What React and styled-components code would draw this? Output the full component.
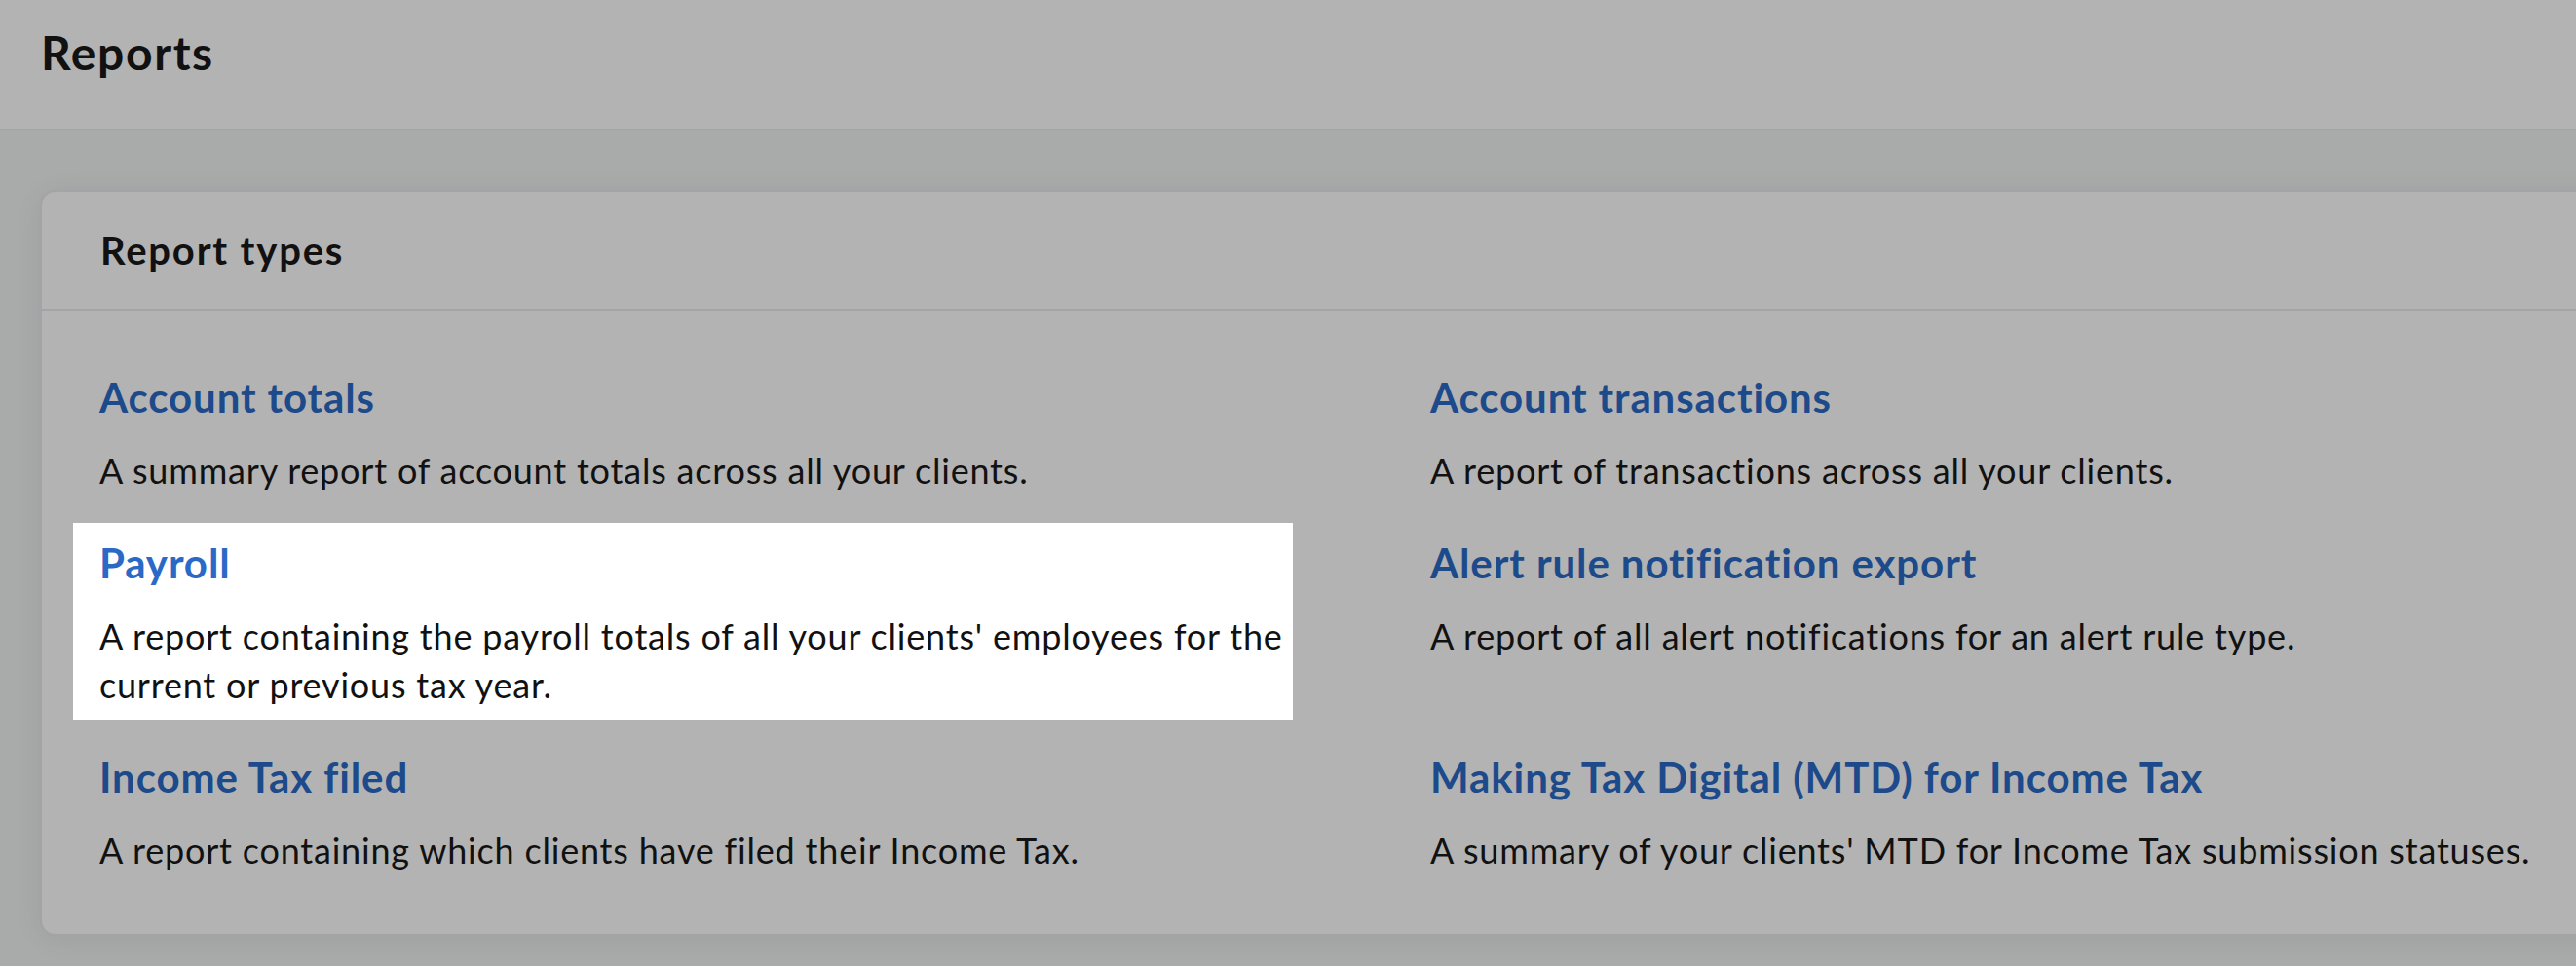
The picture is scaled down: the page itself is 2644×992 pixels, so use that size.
import React from "react";
import styled, { createGlobalStyle } from "styled-components";

const GlobalStyle = createGlobalStyle`
  body {
    margin: 0;
    background: #a9aaaa;
    font-family: Lato, "Liberation Sans", sans-serif;
    color: #111;
    overflow: hidden;
  }
`;

const Page = styled.div`
  width: 2644px;
  height: 992px;
  overflow: hidden;
`;

const Header = styled.header`
  height: 132px;
  background: #b3b3b3;
  border-bottom: 2px solid #a3a3a8;
  padding-left: 42px;
  display: flex;
  align-items: flex-start;
`;

const PageTitle = styled.h1`
  margin: 0;
  padding-top: 24px;
  font-size: 48px;
  line-height: 60px;
  font-weight: 700;
  letter-spacing: 1.6px;
  color: #111;
`;

const Main = styled.main`
  padding: 61px 0 0 41px;
`;

const Card = styled.section`
  width: 2800px;
  background: #b3b3b3;
  border: 2px solid #a3a3a8;
  border-radius: 16px;
  box-shadow: 0 4px 28px rgba(0, 0, 0, 0.07);
`;

const CardHeader = styled.div`
  height: 120px;
  border-bottom: 2px solid #a3a3a8;
  padding-left: 60px;
  display: flex;
  align-items: center;
`;

const CardTitle = styled.h2`
  margin: 0;
  font-size: 40px;
  line-height: 48px;
  font-weight: 700;
  letter-spacing: 1.8px;
  color: #111;
`;

const Grid = styled.div`
  display: grid;
  grid-template-columns: 1252px 1252px;
  column-gap: 114px;
  row-gap: 18px;
  padding: 48px 0 50px 32px;
  align-items: start;
`;

const Item = styled.div`
  padding: 15px 0 11px 27px;
  background: ${(p) => (p.$active ? "#ffffff" : "transparent")};
`;

const ItemLink = styled.a`
  display: block;
  font-size: 42px;
  line-height: 52px;
  font-weight: 700;
  letter-spacing: 0.9px;
  text-decoration: none;
  color: ${(p) => (p.$active ? "#2b69c6" : "#1d4a8a")};
`;

const ItemText = styled.p`
  margin: 24px 0 0;
  font-size: 36px;
  line-height: 50px;
  letter-spacing: 0.8px;
  color: #111;
`;

const reports = [
  {
    title: "Account totals",
    text: "A summary report of account totals across all your clients.",
  },
  {
    title: "Account transactions",
    text: "A report of transactions across all your clients.",
  },
  {
    title: "Payroll",
    text:
      "A report containing the payroll totals of all your clients' employees for the current or previous tax year.",
    active: true,
  },
  {
    title: "Alert rule notification export",
    text: "A report of all alert notifications for an alert rule type.",
  },
  {
    title: "Income Tax filed",
    text: "A report containing which clients have filed their Income Tax.",
  },
  {
    title: "Making Tax Digital (MTD) for Income Tax",
    text: "A summary of your clients' MTD for Income Tax submission statuses.",
  },
];

const App = () => {
  return (
    <Page>
      <GlobalStyle />
      <Header>
        <PageTitle>Reports</PageTitle>
      </Header>
      <Main>
        <Card>
          <CardHeader>
            <CardTitle>Report types</CardTitle>
          </CardHeader>
          <Grid>
            {reports.map((r) => (
              <Item key={r.title} $active={r.active}>
                <ItemLink href="#" $active={r.active}>
                  {r.title}
                </ItemLink>
                <ItemText>{r.text}</ItemText>
              </Item>
            ))}
          </Grid>
        </Card>
      </Main>
    </Page>
  );
};

export default App;
